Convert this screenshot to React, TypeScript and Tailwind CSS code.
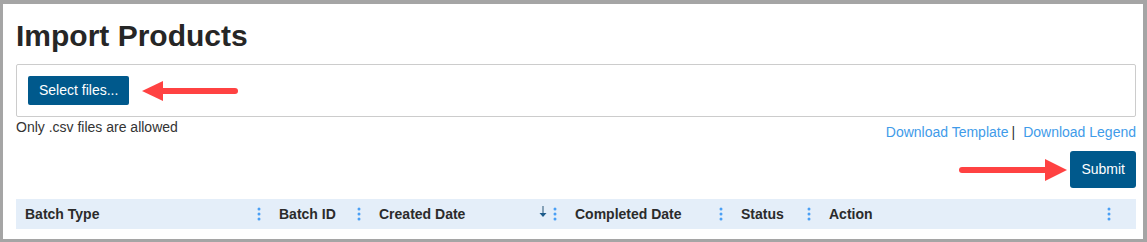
import React from 'react';

const Dots: React.FC = () => (
    <svg width="4" height="14" viewBox="0 0 4 14" className="shrink-0">
        <circle cx="2" cy="2" r="1.5" fill="#4a9ff5" />
        <circle cx="2" cy="7" r="1.5" fill="#4a9ff5" />
        <circle cx="2" cy="12" r="1.5" fill="#4a9ff5" />
    </svg>
);

const SortDown: React.FC = () => (
    <svg width="8" height="12" viewBox="0 0 8 12" className="shrink-0">
        <rect x="3.2" y="0" width="1.6" height="8" fill="#6f8fa8" />
        <path d="M0.5 7 L7.5 7 L4 11 Z" fill="#1d5b8a" />
    </svg>
);

const LeftArrow: React.FC = () => (
    <svg width="96" height="22" viewBox="0 0 96 22" className="shrink-0">
        <path d="M0 11 L21 1 L21 21 Z" fill="#ff4242" />
        <line x1="18" y1="11" x2="93" y2="11" stroke="#ff4242" strokeWidth="6" strokeLinecap="round" />
    </svg>
);

const RightArrow: React.FC = () => (
    <svg width="108" height="24" viewBox="0 0 108 24" className="shrink-0">
        <line x1="3" y1="12" x2="88" y2="12" stroke="#ff4242" strokeWidth="6" strokeLinecap="round" />
        <path d="M108 12 L86 1 L86 23 Z" fill="#ff4242" />
    </svg>
);

const columns = [
    { title: 'Batch Type', width: 'w-[254px]', sort: false },
    { title: 'Batch ID', width: 'w-[100px]', sort: false },
    { title: 'Created Date', width: 'w-[196px]', sort: true },
    { title: 'Completed Date', width: 'w-[166px]', sort: false },
    { title: 'Status', width: 'w-[88px]', sort: false },
];

export default function App() {
    return (
        <div
            className="w-[1147px] h-[242px] overflow-hidden bg-white border-[#a5a5a5] border-t-4 border-l-[3px] border-r-4 border-b-[3px] pl-[13px] pr-[7px]"
            style={{ fontFamily: '"Liberation Sans", Arial, sans-serif' }}
        >
            <h1 className="mt-[14px] h-[36px] text-[30px] leading-[36px] font-bold text-[#262626]">Import Products</h1>

            <div className="mt-[10px] border border-[#cccccc] rounded-[2px] p-[11px] flex items-center">
                <button className="h-[29px] px-[11px] bg-[#00598c] text-white text-[14px] rounded-[2px]">
                    Select files...
                </button>
                <div className="ml-[13px] flex items-center">
                    <LeftArrow />
                </div>
            </div>

            <div className="flex justify-between text-[14px]">
                <p className="leading-[20px] text-[#333333]">Only .csv files are allowed</p>
                <p className="mt-[5px] leading-[20px] flex">
                    <a className="text-[#3f9be9]">Download Template</a>
                    <span className="ml-[3px] text-[#333333]">|</span>
                    <a className="ml-[8px] text-[#3f9be9]">Download Legend</a>
                </p>
            </div>

            <div className="mt-[9px] flex justify-end items-center">
                <RightArrow />
                <button className="ml-[3px] h-[37px] px-[11px] bg-[#00598c] text-white text-[14px] rounded-[3px]">
                    Submit
                </button>
            </div>

            <div className="mt-[11px] h-[30px] bg-[#e4eef9] flex items-center text-[14px] font-bold text-[#2b2b2b]">
                {columns.map(col => (
                    <div key={col.title} className={`${col.width} h-full flex items-center pl-[9px] pr-[9px]`}>
                        <span className="flex-1">{col.title}</span>
                        {col.sort && (
                            <span className="mr-[6px] mt-[-4px] flex">
                                <SortDown />
                            </span>
                        )}
                        <Dots />
                    </div>
                ))}
                <div className="flex-1 h-full flex items-center pl-[9px] pr-[25px]">
                    <span className="flex-1">Action</span>
                    <Dots />
                </div>
            </div>
        </div>
    );
}
